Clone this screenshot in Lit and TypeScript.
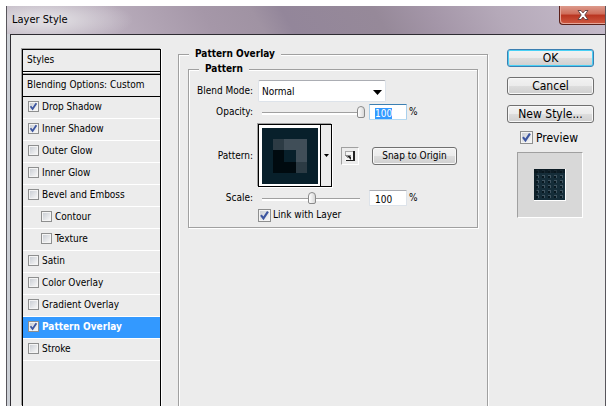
import { LitElement, html, css, svg, nothing } from "lit";
import { customElement } from "lit/decorators.js";
import { classMap } from "lit/directives/class-map.js";

interface Effect {
  id: string;
  label: string;
  on?: boolean;
  nested?: boolean;
  selected?: boolean;
}

const EFFECTS: Effect[] = [
  { id: "drop", label: "Drop Shadow", on: true },
  { id: "inner", label: "Inner Shadow", on: true },
  { id: "oglow", label: "Outer Glow" },
  { id: "iglow", label: "Inner Glow" },
  { id: "bevel", label: "Bevel and Emboss" },
  { id: "contour", label: "Contour", nested: true },
  { id: "texture", label: "Texture", nested: true },
  { id: "satin", label: "Satin" },
  { id: "color", label: "Color Overlay" },
  { id: "gradient", label: "Gradient Overlay" },
  { id: "pattern", label: "Pattern Overlay", on: true, selected: true },
  { id: "stroke", label: "Stroke" },
];

const tick = svg`<path d="M2.5 5.2 L4.6 8 L8.4 2.2" fill="none" stroke="#3c55a0" stroke-width="1.8"/>`;

@customElement("app-root")
export class AppRoot extends LitElement {
  static styles = css`
    :host {
      box-sizing: border-box;
      min-height: 100vh;
      padding: 6px;
      display: flex;
      background: #fff;
      color: #000;
      font: 11px/14px "DejaVu Sans Condensed", "DejaVu Sans", sans-serif;
    }
    * { box-sizing: border-box; }
    button, input, select { font: inherit; color: inherit; margin: 0; }
    .dialog {
      flex: 1;
      display: flex;
      flex-direction: column;
      border: solid #58565c;
      border-width: 0 1px;
    }
    .title {
      display: flex;
      justify-content: space-between;
      height: 28px;
      background:
        radial-gradient(ellipse 90px 24px at 36px 14px, #dedbe0 20%, transparent),
        linear-gradient(60deg, #bdb3c0 0, #b9adbc 18%, #a597a8 34%, #a093a3 42%, #93869a 47%, #968999 62%, #a496a8 71%, #b5a9b9 82%, #c6bccb 100%);
    }
    .title h1 {
      margin: 0;
      padding-left: 5px;
      font-size: 11px;
      line-height: 28px;
      font-weight: 400;
    }
    .close {
      width: 46px;
      height: 19px;
      padding: 0;
      border: solid #5b2019;
      border-width: 0 0 1px 1px;
      border-radius: 0 0 0 4px;
      background: linear-gradient(#dc9a8c 0, #cf6c59 45%, #b93420 50%, #cf5a42 100%);
      box-shadow: inset 1px -1px 0 #e6a598;
      display: flex;
      justify-content: center;
      align-items: center;
    }
    .body {
      flex: 1;
      display: flex;
      border-left: 3px solid #ccd0d6;
      background: #ececec;
    }
    .panes {
      flex: 1;
      display: flex;
      align-items: stretch;
      padding: 14px 11px 0 11px;
      border: solid #2e2c32;
      border-width: 1px 0 0 1px;
    }
    .list {
      width: 139px;
      display: flex;
      flex-direction: column;
      border: 1px solid #000;
      border-bottom: 0;
      box-shadow: -1px -1px 0 #a0a0a0, 1px 0 0 #fff;
      font-size: 10px;
    }
    .head { padding: 0 4px; line-height: 20px; height: 22px; border-bottom: 1px solid #000; }
    .blend {
      height: 25px;
      border-top: 1px solid #fff;
      box-shadow: inset 0 1px 0 #a0a0a0, inset 0 2px 0 #000;
      padding: 2px 4px 0 4px;
      line-height: 20px;
      border-bottom: 1px solid #000;
    }
    ul { list-style: none; margin: 0; padding: 0; }
    .item { height: 22px; border-bottom: 1px solid #fff; }
    .item label { display: flex; align-items: center; gap: 3px; height: 19px; padding: 0 5px; }
    .item.nested label { padding-left: 18px; }
    .item.selected { background: #3399ff; color: #fff; font-weight: 700; }
    .box { position: relative; display: flex; width: 11px; height: 11px; flex: none; }
    .box input {
      appearance: none;
      width: 100%;
      height: 100%;
      border: 1px solid #8e8f8f;
      background: linear-gradient(135deg, #cbcfd5, #f6f6f6) content-box, #f4f4f4;
      padding: 1px;
    }
    .box svg { position: absolute; inset: 0; width: 100%; height: 100%; pointer-events: none; }
    .box.big { width: 13px; height: 13px; }
    fieldset {
      min-width: 0;
      margin: 0;
      border: 1px solid #a0a0a0;
      box-shadow: 1px 1px 0 #fff, inset 1px 1px 0 #fff;
    }
    legend { background: #ececec; font-weight: 700; padding: 0 6px; line-height: 12px; font-size: 10px; }
    .outer { flex: 1; margin: -1px 19px 0 17px; padding: 3px 9px 0 9px; border-bottom: 0; }
    .outer > legend { margin-left: 1px; }
    .inner { padding: 5px 9px 5px 7px; font-size: 10px; }
    .inner > legend { margin-left: 3px; }
    .row { display: flex; align-items: center; }
    .name { width: 57px; margin-right: 5px; text-align: right; white-space: nowrap; flex: none; }
    .opacity { margin: 2px 0 4px; }
    .scale { margin: 3px 0 2px; }
    .combo { position: relative; display: flex; width: 128px; }
    .combo select {
      appearance: none;
      width: 100%;
      height: 22px;
      padding: 2px 0 0;
      text-indent: 3px;
      border: 1px solid #dde3ea;
      border-top-color: #abadb3;
      border-radius: 2px;
      background: #fff;
    }
    .combo svg { position: absolute; right: 4px; top: 10px; pointer-events: none; }
    .slider {
      appearance: none;
      width: 107px;
      height: 13px;
      margin-right: 4px;
      background:
        linear-gradient(#a0a0a0, #a0a0a0) 4px 6px / 98px 1px no-repeat,
        linear-gradient(#fff, #fff) 4px 7px / 98px 2px no-repeat;
    }
    .slider::-webkit-slider-thumb {
      appearance: none;
      width: 8px;
      height: 12px;
      border: 1px solid #8a8a8a;
      border-radius: 4px 4px 2px 2px;
      background: linear-gradient(90deg, #fff, #d8d8d8);
    }
    .num {
      width: 38px;
      height: 16px;
      padding: 2px 5px 0;
      border: 1px solid #dde3ea;
      border-top-color: #abadb3;
      border-radius: 1px;
      background: #fff;
      outline: 0;
      margin-right: 2px;
    }
    .num.active { border-color: #3c7fb1 #a9d0ec #b5d9f0; }
    .num::selection { background: #3399ff; color: #fff; }
    .picker {
      display: flex;
      width: 74px;
      height: 63px;
      padding: 0;
      border: 1px solid #000;
      background: #ececec;
      box-shadow: -1px -1px 0 #a0a0a0, 1px 1px 0 #fff;
      margin-right: 9px;
    }
    .picker .well { padding: 2px; border-right: 1px solid #000; background: #fff; display: flex; height: 61px; width: 62px; justify-content: center; align-items: center; }
    .picker .drop { flex: 1; display: flex; align-items: center; justify-content: center; align-self: center; }
    .new {
      width: 18px;
      height: 18px;
      padding: 0;
      display: flex;
      align-items: center;
      justify-content: center;
      border: 1px solid;
      border-color: #a0a0a0 #fff #fff #a0a0a0;
      background: #ececec;
      margin-right: 13px;
    }
    .btn {
      height: 18px;
      padding: 0;
      border: 1px solid #707070;
      border-radius: 3px;
      background: linear-gradient(#f2f2f2 0, #ebebeb 50%, #dddddd 50%, #cfcfcf 100%);
      box-shadow: inset 0 0 0 1px #f8f8f8;
      text-align: center;
      line-height: 16px;
      white-space: nowrap;
    }
    .snap { width: 85px; }
    .link { display: flex; align-items: center; gap: 2px; margin-left: 62px; }
    .side { width: 87px; display: flex; flex-direction: column; font-size: 12px; }
    .side .btn { margin-bottom: 10px; }
    .side .btn.primary { border-color: #3c7fb1; box-shadow: inset 0 0 0 1px #48d0f5; }
    .preview { display: flex; align-items: center; gap: 3px; height: 13px; margin: -2px 0 8px 13px; }
    .thumb {
      margin-left: 10px;
      display: flex;
      align-items: center;
      justify-content: center;
      width: 66px;
      height: 66px;
      border: 1px solid;
      border-color: #a0a0a0 #fff #fff #a0a0a0;
      background: #d8d8d8;
    }
  `;

  firstUpdated() {
    const field = this.renderRoot.querySelector<HTMLInputElement>("#opacity");
    field?.focus();
    field?.select();
  }

  private check(id: string, on = false, big = false) {
    return html`<span class=${classMap({ box: true, big })}>
      <input type="checkbox" id=${id} .checked=${on} />
      ${on ? html`<svg viewBox="0 0 11 11" aria-hidden="true">${tick}</svg>` : nothing}
    </span>`;
  }

  render() {
    return html`
      <div class="dialog">
        <header class="title">
          <h1>Layer Style</h1>
          <button class="close" aria-label="Close">
            <svg width="12" height="10" viewBox="0 0 12 10">
              <path d="M1 .5h3l2 2.4 2-2.4h3L7.8 5 11 9.5H8L6 7 4 9.5H1L4.2 5z" fill="#fff" stroke="#5c3a3a" stroke-width=".9" />
            </svg>
          </button>
        </header>
        <div class="body"><div class="panes">
          <nav class="list">
            <div class="head">Styles</div>
            <div class="blend">Blending Options: Custom</div>
            <ul>
              ${EFFECTS.map((e) => html`
                <li class=${classMap({ item: true, nested: !!e.nested, selected: !!e.selected })}>
                  <label for=${e.id}>${this.check(e.id, e.on)}${e.label}</label>
                </li>`)}
            </ul>
          </nav>
          <fieldset class="outer">
            <legend>Pattern Overlay</legend>
            <fieldset class="inner">
              <legend>Pattern</legend>
              <div class="row">
                <label class="name" for="mode">Blend Mode:</label>
                <span class="combo">
                  <select id="mode"><option>Normal</option></select>
                  <svg width="9" height="5" viewBox="0 0 9 5"><path d="M0 0h9L4.5 5z" /></svg>
                </span>
              </div>
              <div class="row opacity">
                <label class="name" for="opacity">Opacity:</label>
                <input class="slider" type="range" min="0" max="100" .value=${"100"} aria-label="Opacity" />
                <input class="num active" id="opacity" type="text" .value=${"100"} />%
              </div>
              <div class="row">
                <span class="name">Pattern:</span>
                <button class="picker" aria-label="Pattern picker">
                  <span class="well">
                    <svg width="56" height="56" viewBox="0 0 56 56" shape-rendering="crispEdges">
                      <rect width="56" height="56" fill="#08202b" />
                      <rect x="11" y="11" width="34" height="34" fill="#404e58" />
                      <rect x="11" y="11" width="11" height="11" fill="#2c3b44" />
                      <rect x="34" y="34" width="11" height="11" fill="#2c3b44" />
                      <path d="M11 22h23v23H11z" fill="#000a0f" />
                      <rect x="22" y="22" width="12" height="12" fill="#08202b" />
                    </svg>
                  </span>
                  <span class="drop"><svg width="5" height="3" viewBox="0 0 5 3"><path d="M0 0h5L2.5 3z" /></svg></span>
                </button>
                <button class="new" aria-label="New preset">
                  <svg width="10" height="10" viewBox="0 0 10 10" shape-rendering="crispEdges">
                    <rect width="10" height="10" fill="#f4f4f4" />
                    <path d="M0 0h9v1H0zM0 1h1v3H0z" fill="#a8a8a8" />
                    <path d="M8 0h2v10H1V9h7z" fill="#222" />
                    <path d="M0 4h6v5H5V8H4V7H2V6H1V5H0z" fill="#8a8a8a" />
                    <path d="M3 5h2v1H3zM4 6h2v2H5V7H4z" fill="#222" />
                  </svg>
                </button>
                <button class="btn snap">Snap to Origin</button>
              </div>
              <div class="row scale">
                <label class="name" for="scale">Scale:</label>
                <input class="slider" type="range" min="0" max="200" .value=${"100"} aria-label="Scale" />
                <input class="num" id="scale" type="text" .value=${"100"} />%
              </div>
              <label class="link" for="link">${this.check("link", true, true)}Link with Layer</label>
            </fieldset>
          </fieldset>
          <aside class="side">
            <button class="btn primary">OK</button>
            <button class="btn">Cancel</button>
            <button class="btn">New Style...</button>
            <label class="preview" for="preview">${this.check("preview", true, true)}Preview</label>
            <div class="thumb">
              <svg width="32" height="32" viewBox="0 0 32 32" shape-rendering="crispEdges">
                <defs>
                  <pattern id="weave" width="6" height="5" patternUnits="userSpaceOnUse">
                    <rect width="6" height="5" fill="#152d39" />
                    <path d="M2 1h3v3H4V2H2z" fill="#3f535f" />
                    <rect x="2" y="2" width="2" height="2" fill="#081820" />
                  </pattern>
                </defs>
                <rect width="32" height="32" fill="#fff" />
                <rect width="31" height="31" fill="url(#weave)" />
                <rect width="31" height="4" fill="#08151c" opacity=".7" />
                <rect width="3" height="31" fill="#08151c" opacity=".5" />
              </svg>
            </div>
          </aside>
        </div></div>
      </div>
    `;
  }
}
